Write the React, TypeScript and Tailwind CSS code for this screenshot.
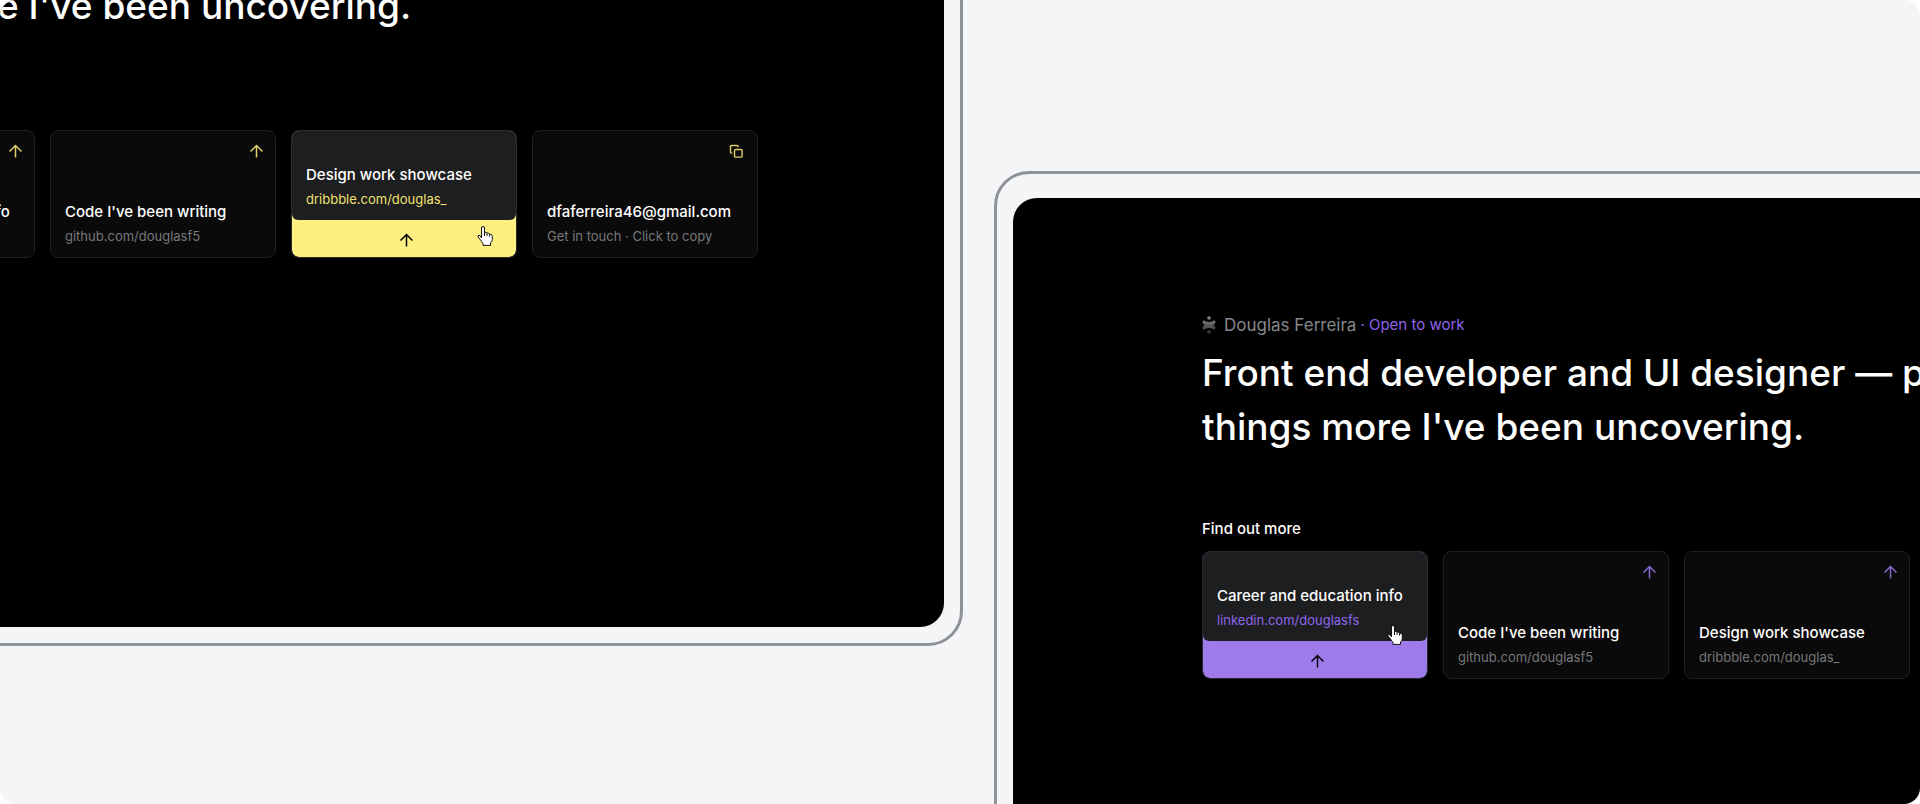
import type { ReactNode } from "react";

type Theme = "yellow" | "purple";

const themes = {
  yellow: { text: "text-[#f3e16f]", icon: "text-[#e0cf6c]", fill: "bg-[#ffee80]" },
  purple: { text: "text-[#8f64ea]", icon: "text-[#8b67d6]", fill: "bg-[#9f7aea]" },
};

const links = [
  { title: "Career and education info", sub: "linkedin.com/douglasfs", href: "https://linkedin.com/in/douglasfs" },
  { title: "Code I've been writing", sub: "github.com/douglasf5", href: "https://github.com/douglasf5" },
  { title: "Design work showcase", sub: "dribbble.com/douglas_", href: "https://dribbble.com/douglas_" },
  { title: "dfaferreira46@gmail.com", sub: "Get in touch · Click to copy", copy: true },
];

function ArrowUp() {
  return (
    <svg width="14" height="14" viewBox="0 0 14 14" fill="none" stroke="currentColor" strokeWidth="1.5" aria-hidden="true">
      <path d="M7.5 13.5V1.5M1.5 7.5l6-6 6 6" />
    </svg>
  );
}

function CopyIcon() {
  return (
    <svg width="16" height="14" viewBox="0 0 16 14" fill="none" stroke="currentColor" strokeWidth="1.4" aria-hidden="true">
      <rect x="5.500" y="5.500" width="7.6" height="7.6" rx="1.2" />
      <path d="M3.300 9.1H2.7a1.2 1.2 0 0 1-1.2-1.2V2.700A1.2 1.2 0 0 1 2.700 1.500h5.2a1.2 1.2 0 0 1 1.2 1.2v.6" />
    </svg>
  );
}

function Logo() {
  return (
    <svg width="14" height="18" viewBox="0 0 14 18" fill="url(#logo-fade)" aria-hidden="true">
      <defs>
        <linearGradient id="logo-fade" gradientUnits="userSpaceOnUse" x1="7" y1="0" x2="7" y2="18">
          <stop offset="0" stopColor="#8b8d91" />
          <stop offset="1" stopColor="#2e2f31" />
        </linearGradient>
      </defs>
      <circle cx="7" cy="2" r="1.8" />
      <circle cx="7" cy="16" r="1.8" />
      <path d="M1.3 4.2 Q4 6 7 6 T12.7 4.2 L13.6 6.4 Q12.500 8.2 11 9 Q12.600 9.8 13.6 11.6 L12.7 13.8 Q10 12 7 12 T1.3 13.8 L.4 11.6 Q1.400 9.8 3 9 Q1.400 8.200 .4 6.400Z" />
    </svg>
  );
}

function HandCursor() {
  return (
    <svg width="16" height="20" viewBox="0 0 16 20" fill="#fff" stroke="#111" strokeWidth="1" strokeLinejoin="round" aria-hidden="true">
      <path d="M4.500 12V2A1.500 1.500 0 0 1 7.500 2V6.500Q9.500 5.500 10 7.200Q12 6.500 12.500 8.200Q15 7.800 15.300 10V13.500Q15.300 15.500 13.500 17V19.400H6V17.400Q4.500 16 3.600 14L1 11Q.5 9.500 2 9.300Q3.400 9.500 4.500 12Z" />
      <path d="M7.500 6.500V10M10 7.200V10M12.500 8.200V10.500" fill="none" />
    </svg>
  );
}

function CardShell({ href, className, children }: { href?: string; className: string; children: ReactNode }) {
  return href ? (
    <a href={href} className={className}>{children}</a>
  ) : (
    <button type="button" className={className}>{children}</button>
  );
}

function LinkCard({ item, theme, active, cursor }: { item: (typeof links)[number]; theme: Theme; active: boolean; cursor: string }) {
  const t = themes[theme];
  if (active) {
    return (
      <CardShell href={item.href} className={`relative flex h-32 w-[226px] shrink-0 flex-col overflow-hidden rounded-lg border border-[#2a2b2d] bg-clip-padding ${t.fill}`}>
        <span className="flex h-[89px] flex-col justify-end gap-1 rounded-md bg-[#1d1e20] px-3.5 pb-[11px]">
          <span className="text-[15px] leading-5 font-medium text-white">{item.title}</span>
          <span className={`text-[13px] leading-5 ${t.text}`}>{item.sub}</span>
        </span>
        <span className="flex flex-1 items-center justify-center pt-0.5 pl-1 text-black">
          <ArrowUp />
        </span>
        <span className={cursor}>
          <HandCursor />
        </span>
      </CardShell>
    );
  }
  return (
    <CardShell href={item.href} className="flex h-32 w-[226px] shrink-0 flex-col justify-between rounded-lg border border-[#1f2021] bg-[#0a0a0a] pt-[13px] pr-3 pb-[11px] pl-3.5 text-left">
      <span className={`flex justify-end ${t.icon}`}>{item.copy ? <CopyIcon /> : <ArrowUp />}</span>
      <span className="flex flex-col gap-1">
        <span className="text-[15px] leading-5 font-medium text-white">{item.title}</span>
        <span className="text-[13px] leading-5 text-[#76787b]">{item.sub}</span>
      </span>
    </CardShell>
  );
}

function Screen({ theme, active, cursor }: { theme: Theme; active: number; cursor: string }) {
  return (
    <div className="h-[850px] w-[1324px] overflow-hidden rounded-3xl bg-black px-[189px] pt-[115px]">
      <p className="flex items-center text-[17px] leading-6 text-[#85878a]">
        <Logo />
        <span className="pl-2">Douglas Ferreira</span>
        <span className={`pl-1 text-[15px] ${themes[theme].text}`}>· Open to work</span>
      </p>
      <h1 className="pt-[9px] text-[37px] leading-[54px] font-medium text-white">
        Front end developer and UI designer — plus some <br />
        things more I've been uncovering.
      </h1>
      <h2 className="pt-[65px] text-[15px] leading-5 font-medium text-white">Find out more</h2>
      <div className="flex gap-[15px] pt-3">
        {links.map((item, i) => (
          <LinkCard key={item.title} item={item} theme={theme} active={i === active} cursor={cursor} />
        ))}
      </div>
    </div>
  );
}

export default function App() {
  return (
    <div className="bg-white font-[Inter,sans-serif]">
      <main className="grid h-screen grid-cols-[963fr_957fr] overflow-hidden rounded-2xl bg-[#f3f5f7]">
        <section className="flex min-w-0 items-start justify-end">
          <div className="-mt-[250px] shrink-0 rounded-[35px] border-3 border-[#8f9299] px-4 pt-6 pb-4">
            <Screen theme="yellow" active={2} cursor="absolute top-[95px] right-[23px]" />
          </div>
        </section>
        <section className="flex min-w-0 items-start pt-[171px] pl-[31px]">
          <div className="shrink-0 rounded-[35px] border-3 border-[#8f9299] px-4 pt-6 pb-4">
            <Screen theme="purple" active={0} cursor="absolute top-[73px] right-6" />
          </div>
        </section>
      </main>
    </div>
  );
}
